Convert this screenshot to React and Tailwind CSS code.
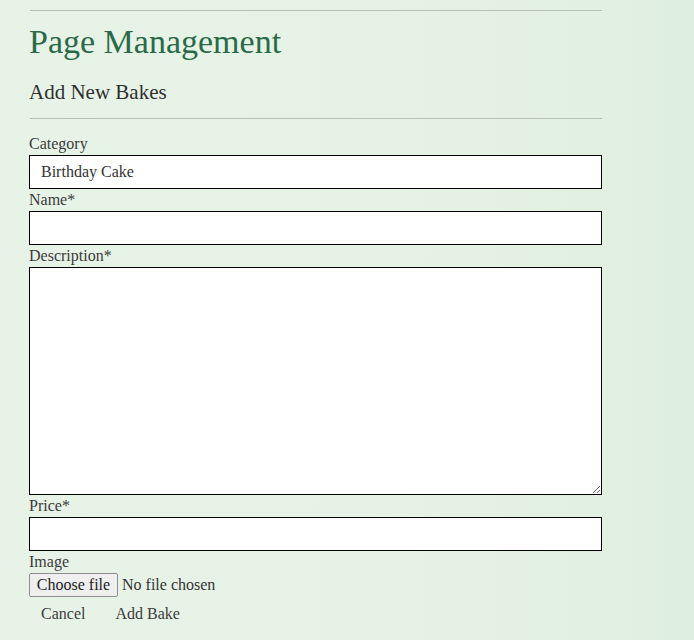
import React, { useState, useRef } from 'react';

export default function App() {
  const [category, setCategory] = useState('Birthday Cake');
  const [fileName, setFileName] = useState('');
  const fileRef = useRef(null);

  return (
    <div className="min-h-screen w-full bg-linear-to-r from-[#e8f3e8] via-[#e7f2e6] to-[#dfefdf] font-['Liberation_Serif',serif] text-[#3b3b3b]">
      <div className="w-[602px] pl-[29px] pt-[10px]">
        <hr className="ml-[1px] border-0 border-t border-[#b6c0b6]" />
        <h1 className="mt-[10px] text-[34px] leading-[41px] text-[#2a6a48]">Page Management</h1>
        <h2 className="mt-[16px] text-[21px] leading-[28px] text-[#2f2f2f]">Add New Bakes</h2>
        <hr className="ml-[1px] mt-[12px] border-0 border-t border-[#b6c0b6]" />

        <form className="mt-[14px] flex flex-col" onSubmit={e => e.preventDefault()}>
          <label className="text-[16px] leading-[22px]">Category</label>
          <select
            value={category}
            onChange={e => setCategory(e.target.value)}
            className="h-[34px] w-full appearance-none border border-black bg-white px-[11px] text-[16px] text-[#333] outline-none"
          >
            <option>Birthday Cake</option>
            <option>Wedding Cake</option>
            <option>Cupcakes</option>
          </select>

          <label className="text-[16px] leading-[22px]">Name*</label>
          <input type="text" className="h-[34px] w-full border border-black bg-white px-2 outline-none" />

          <label className="text-[16px] leading-[22px]">Description*</label>
          <textarea className="h-[228px] w-full border border-black bg-white px-2 outline-none" />

          <label className="text-[16px] leading-[22px]">Price*</label>
          <input type="text" className="h-[34px] w-full border border-black bg-white px-2 outline-none" />

          <label className="text-[16px] leading-[22px]">Image</label>
          <div className="flex h-[24px] items-center text-[16px] text-[#333]">
            <input
              type="file"
              ref={fileRef}
              className="hidden"
              onChange={e => setFileName(e.target.files[0] ? e.target.files[0].name : '')}
            />
            <button
              type="button"
              onClick={() => fileRef.current.click()}
              className="mr-[4px] h-[24px] w-[89px] rounded-[2px] border border-[#8f8f8f] bg-[#efefef] leading-[20px] text-[#222]"
            >
              Choose file
            </button>
            <span>{fileName || 'No file chosen'}</span>
          </div>

          <div className="flex gap-[6px]">
            <button type="button" className="px-[12px] py-[6px] text-[16px] leading-[22px] text-[#3b3b3b]">Cancel</button>
            <button type="submit" className="px-[12px] py-[6px] text-[16px] leading-[22px] text-[#3b3b3b]">Add Bake</button>
          </div>
        </form>
      </div>
    </div>
  );
}
